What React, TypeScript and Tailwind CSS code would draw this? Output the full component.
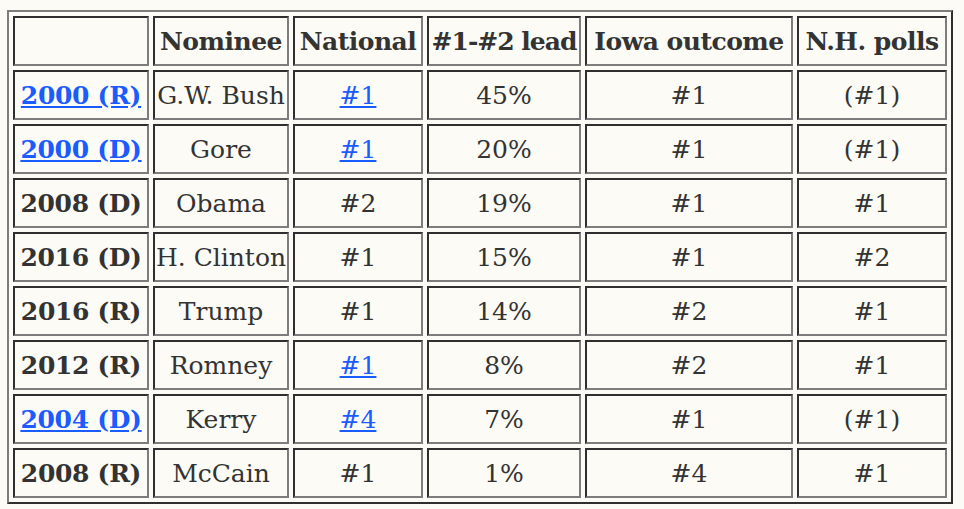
type Row = {
    year: string
    yearLink?: boolean
    nominee: string
    national: string
    nationalLink?: boolean
    lead: string
    iowa: string
    nh: string
}

const rows: Row[] = [
    { year: "2000 (R)", yearLink: true, nominee: "G.W. Bush", national: "#1", nationalLink: true, lead: "45%", iowa: "#1", nh: "(#1)" },
    { year: "2000 (D)", yearLink: true, nominee: "Gore", national: "#1", nationalLink: true, lead: "20%", iowa: "#1", nh: "(#1)" },
    { year: "2008 (D)", nominee: "Obama", national: "#2", lead: "19%", iowa: "#1", nh: "#1" },
    { year: "2016 (D)", nominee: "H. Clinton", national: "#1", lead: "15%", iowa: "#1", nh: "#2" },
    { year: "2016 (R)", nominee: "Trump", national: "#1", lead: "14%", iowa: "#2", nh: "#1" },
    { year: "2012 (R)", nominee: "Romney", national: "#1", nationalLink: true, lead: "8%", iowa: "#2", nh: "#1" },
    { year: "2004 (D)", yearLink: true, nominee: "Kerry", national: "#4", nationalLink: true, lead: "7%", iowa: "#1", nh: "(#1)" },
    { year: "2008 (R)", nominee: "McCain", national: "#1", lead: "1%", iowa: "#4", nh: "#1" },
]

// inset cell border: dark top/left, grey bottom/right
const cell = "h-[50px] border-2 border-t-[#2f2f2f] border-l-[#2f2f2f] border-b-[#7d7d7d] border-r-[#7d7d7d] text-center align-middle px-0 py-0 whitespace-nowrap overflow-hidden"

const App = () => {
    return (
        <div className="min-h-[509px] bg-[#fcfbf5] pt-[10px] pl-[7px] text-[#333333] font-['DejaVu_Serif',serif] text-[25px] leading-[31px]">
            <table className="table-fixed w-[946px] border-separate border-spacing-[4px] border-2 border-t-[#7d7d7d] border-l-[#7d7d7d] border-b-[#2f2f2f] border-r-[#2f2f2f]">
                <thead>
                    <tr>
                        <th className={`${cell} w-[136px] h-[49px]`}></th>
                        <th className={`${cell} w-[136px] h-[49px] font-bold tracking-[-0.5px]`}>Nominee</th>
                        <th className={`${cell} w-[130px] h-[49px] font-bold tracking-[-0.5px]`}>National</th>
                        <th className={`${cell} w-[154px] h-[49px] font-bold tracking-[-1px]`}>#1-#2 lead</th>
                        <th className={`${cell} w-[208px] h-[49px] font-bold tracking-[-0.5px]`}>Iowa outcome</th>
                        <th className={`${cell} w-[150px] h-[49px] font-bold tracking-[-0.5px]`}>N.H. polls</th>
                    </tr>
                </thead>
                <tbody>
                    {rows.map((r) => (
                        <tr key={r.year + r.nominee}>
                            <th className={`${cell} font-bold tracking-[-0.3px]`}>
                                {r.yearLink ? (
                                    <a href="#" className="text-[#1a5cff] underline">{r.year}</a>
                                ) : (
                                    r.year
                                )}
                            </th>
                            <td className={cell}>{r.nominee}</td>
                            <td className={cell}>
                                {r.nationalLink ? (
                                    <a href="#" className="text-[#1a5cff] underline">{r.national}</a>
                                ) : (
                                    r.national
                                )}
                            </td>
                            <td className={cell}>{r.lead}</td>
                            <td className={cell}>{r.iowa}</td>
                            <td className={cell}>{r.nh}</td>
                        </tr>
                    ))}
                </tbody>
            </table>
        </div>
    )
}

export default App
